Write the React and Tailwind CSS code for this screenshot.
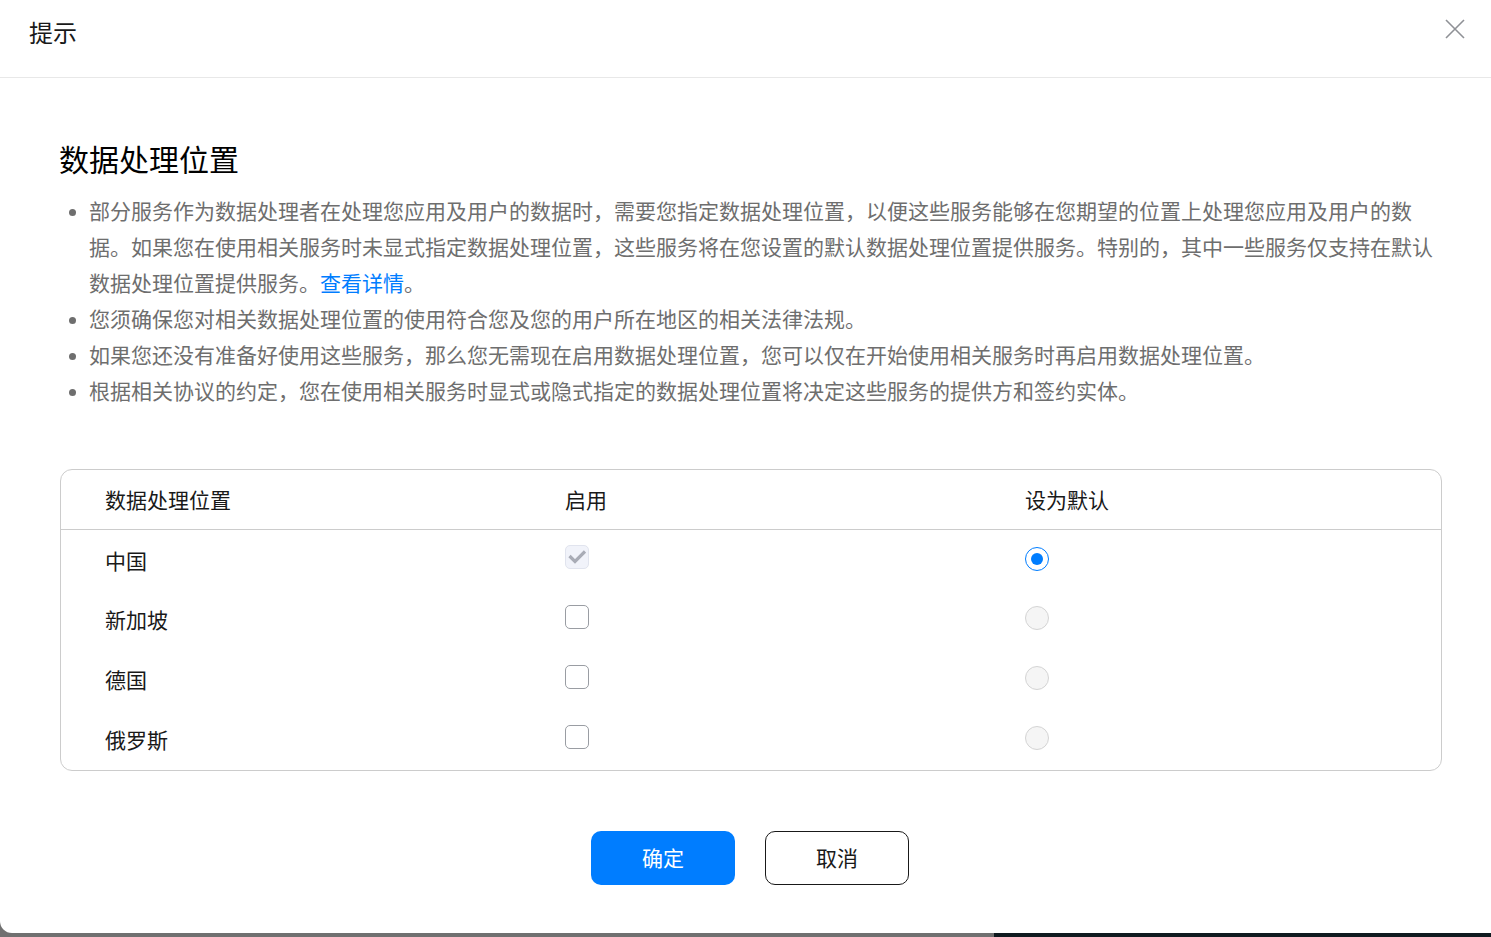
const font = { fontFamily: '"Noto Sans CJK SC", sans-serif' };

const regions = [
  { name: '中国', enabled: true, isDefault: true },
  { name: '新加坡' },
  { name: '德国' },
  { name: '俄罗斯' },
];

function Check({ checked }) {
  if (checked) {
    return (
      <span className="flex h-6 w-6 items-center justify-center rounded-[5px] border border-[#e1e4ee] bg-[#f1f3fa]">
        <svg viewBox="0 0 18 18" className="h-[18px] w-[18px]" fill="none" stroke="#a9acb6" strokeWidth="3.2">
          <path d="M1.5 8L7 13.5 17 3.5" />
        </svg>
      </span>
    );
  }
  return <span className="block h-6 w-6 rounded-[5px] border border-[#9a9da3] bg-white" />;
}

function Radio({ selected }) {
  if (selected) {
    return (
      <span className="flex h-6 w-6 items-center justify-center rounded-full border border-[#007dff] bg-white">
        <span className="block h-3 w-3 rounded-full bg-[#007dff]" />
      </span>
    );
  }
  return <span className="block h-6 w-6 rounded-full border border-[#d4d4d4] bg-[#f5f5f5]" />;
}

function Item({ children }) {
  return (
    <li className="flex">
      <span className="ml-[10px] mr-[13px] mt-[17px] h-[7px] w-[7px] shrink-0 rounded-full bg-[#6e6e6e]" />
      <div>{children}</div>
    </li>
  );
}

export default function App() {
  return (
    <div className="flex h-[937px] w-[1491px] flex-col overflow-hidden bg-[#707070]" style={font}>
      <div className="h-[933px] rounded-bl-[12px] bg-white">
        <div className="flex h-[78px] items-center justify-between border-b border-[#e8e8e8] pl-[29px] pr-[26px]">
          <span className="-mt-[14px] text-[24px] leading-[32px] text-[#191919]">提示</span>
          <button className="-mt-[20px]">
            <svg viewBox="0 0 20 20" className="h-5 w-5" fill="none" stroke="#8f9196" strokeWidth="1.6">
              <path d="M1 1l18 18M19 1L1 19" />
            </svg>
          </button>
        </div>

        <div className="pl-[59px] pr-[49px]">
          <h1 className="mt-[58px] text-[30px] font-normal leading-[44px] text-black">数据处理位置</h1>
          <ul className="mt-[12px] text-[21px] leading-[36px] text-[#6e6e6e]">
            <Item>
              部分服务作为数据处理者在处理您应用及用户的数据时，需要您指定数据处理位置，以便这些服务能够在您期望的位置上处理您应用及用户的数据。如果您在使用相关服务时未显式指定数据处理位置，这些服务将在您设置的默认数据处理位置提供服务。特别的，其中一些服务仅支持在默认数据处理位置提供服务。
              <a className="text-[#007dff]">查看详情</a>。
            </Item>
            <Item>您须确保您对相关数据处理位置的使用符合您及您的用户所在地区的相关法律法规。</Item>
            <Item>如果您还没有准备好使用这些服务，那么您无需现在启用数据处理位置，您可以仅在开始使用相关服务时再启用数据处理位置。</Item>
            <Item>根据相关协议的约定，您在使用相关服务时显式或隐式指定的数据处理位置将决定这些服务的提供方和签约实体。</Item>
          </ul>

          <div className="ml-px mt-[61px] h-[302px] w-[1382px] rounded-[12px] border border-[#cccccc] text-[21px] text-[#191919]">
            <div className="grid h-[60px] grid-cols-[460px_460px_1fr] items-center border-b border-[#cccccc] pl-[44px]">
              <span>数据处理位置</span>
              <span>启用</span>
              <span>设为默认</span>
            </div>
            {regions.map((r) => (
              <div
                key={r.name}
                className={r.isDefault ? 'grid h-[60px] grid-cols-[460px_460px_1fr] items-center pl-[44px] pt-[2px]' : 'grid h-[60px] grid-cols-[460px_460px_1fr] items-center pl-[44px]'}
              >
                <span>{r.name}</span>
                <span className={r.isDefault ? '-mt-[8px]' : '-mt-[6px]'}><Check checked={r.enabled} /></span>
                <span className="-mt-[4px]"><Radio selected={r.isDefault} /></span>
              </div>
            ))}
          </div>
        </div>

        <div className="ml-[591px] mt-[60px] flex gap-[30px] text-[21px]">
          <button className="h-[54px] w-[144px] rounded-[10px] bg-[#007dff] text-white">确定</button>
          <button className="h-[54px] w-[144px] rounded-[10px] border border-[#191919] bg-white text-[#191919]">取消</button>
        </div>
      </div>
      <div className="flex h-1 w-full">
        <div className="w-[994px] bg-[#707070]" />
        <div className="flex-1 bg-[#0f1a1f]" />
      </div>
    </div>
  );
}
